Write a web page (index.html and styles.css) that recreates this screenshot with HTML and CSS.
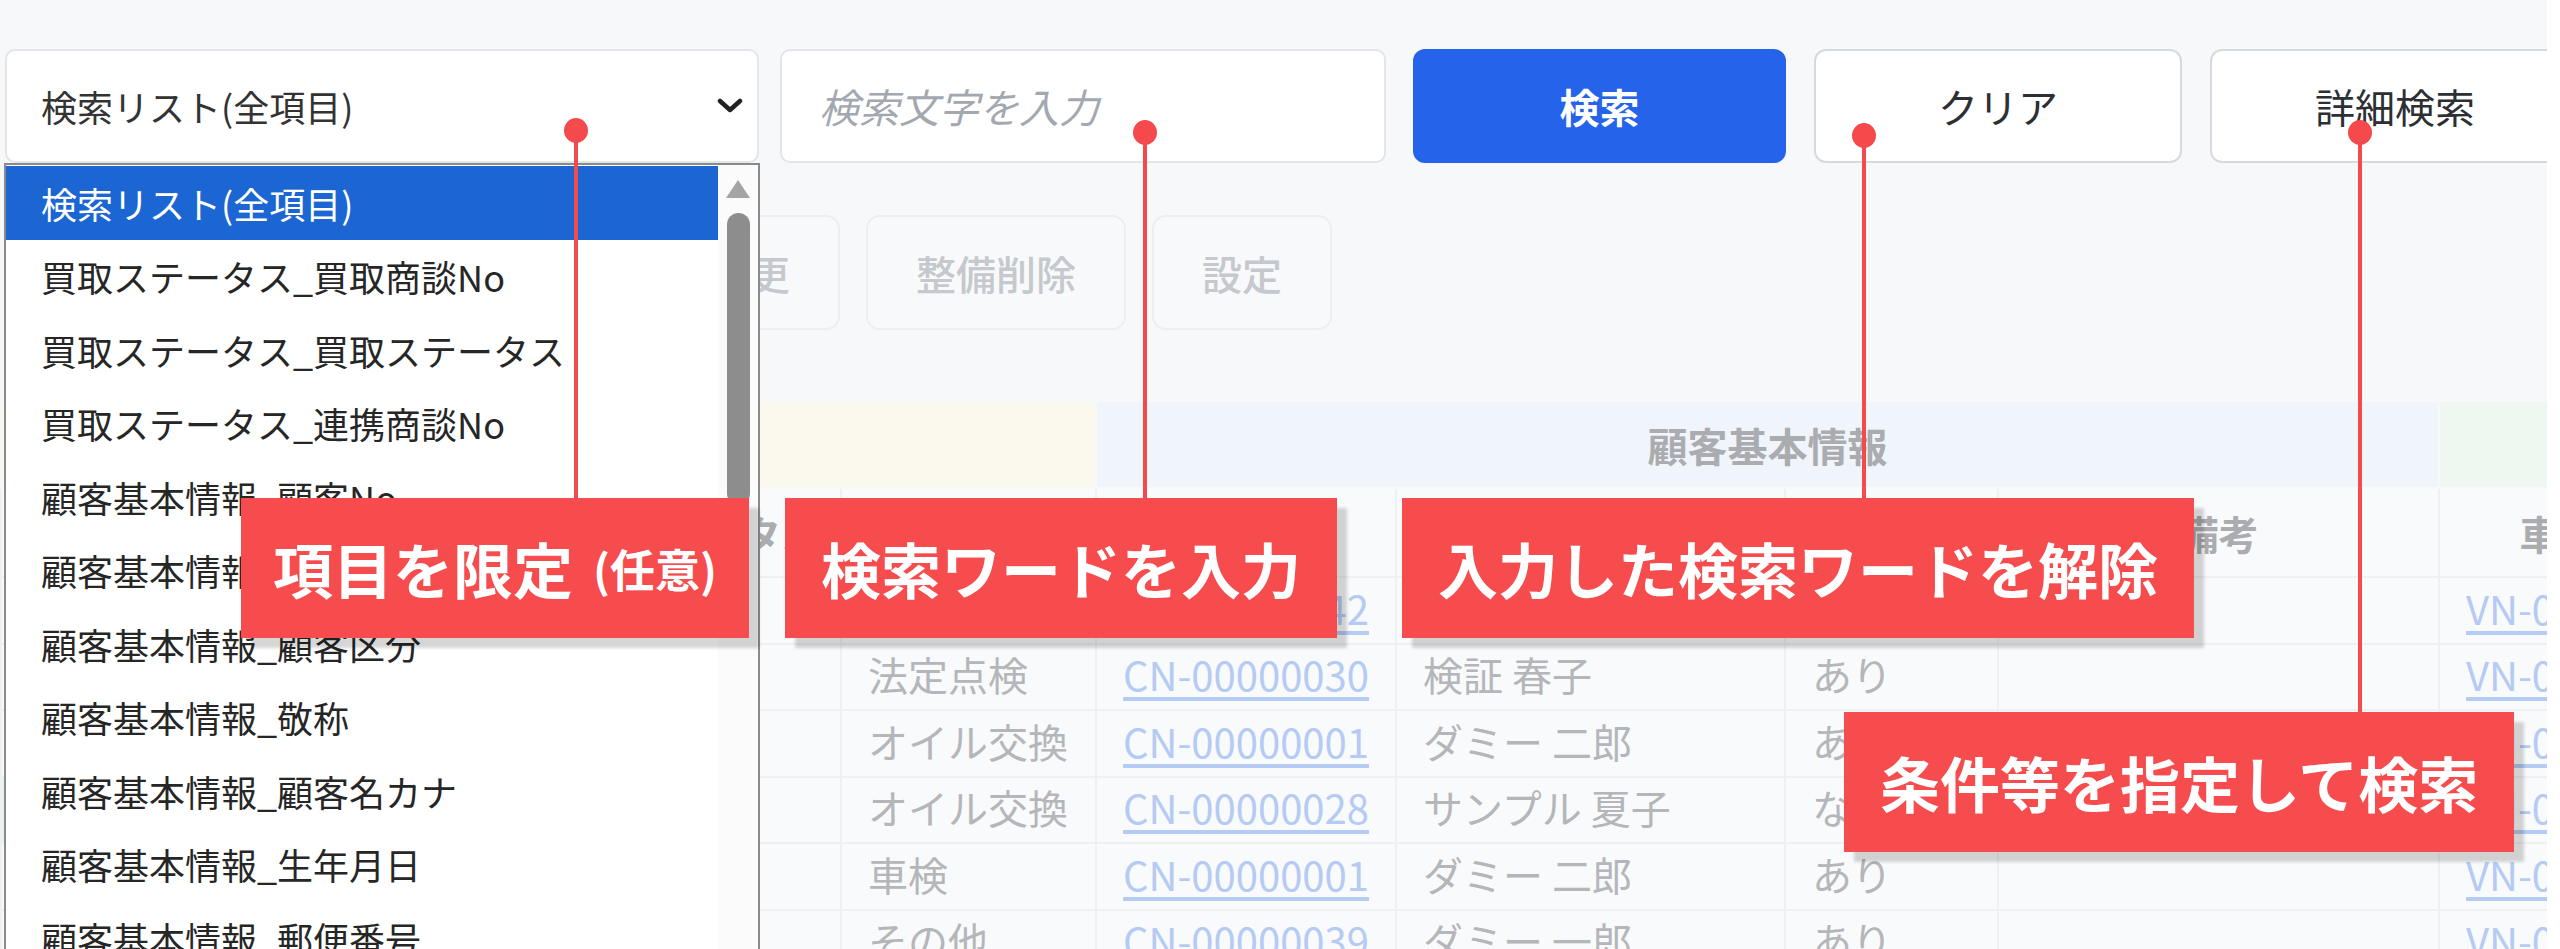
FILE: index.html
```html
<!DOCTYPE html>
<html lang="ja">
<head>
  <meta charset="UTF-8">
  <title>検索リスト</title>
  <link rel="stylesheet" href="styles.css">
</head>
<body>
<div class="page">

  <div class="toolbar">
    <div class="select-box">
      <span>検索リスト(全項目)</span>
      <svg class="chevron" width="26" height="16" viewBox="0 0 26 16">
        <polyline points="3,3 13,12 23,3" fill="none" stroke="#222" stroke-width="4.5" stroke-linecap="round" stroke-linejoin="round"/>
      </svg>
    </div>
    <div class="search-input"><span class="placeholder">検索文字を入力</span></div>
    <button class="btn btn-primary">検索</button>
    <button class="btn btn-clear">クリア</button>
    <button class="btn btn-detail">詳細検索</button>
  </div>

  <div class="actions">
    <button class="act">新規登録</button>
    <button class="act">整備登録</button>
    <button class="act">整備変更</button>
    <button class="act">整備削除</button>
    <button class="act">設定</button>
  </div>

  <table class="grid">
    <colgroup>
      <col style="width:600px">
      <col style="width:240px">
      <col style="width:255px">
      <col style="width:300px">
      <col style="width:389px">
      <col style="width:213px">
      <col style="width:441px">
      <col style="width:296px">
    </colgroup>
    <tr class="group-row">
      <th colspan="3" class="g-yellow">買取ステータス</th>
      <th colspan="4" class="g-blue">顧客基本情報</th>
      <th class="g-green"></th>
    </tr>
    <tr class="head-row">
      <th></th>
      <th>ステータス</th>
      <th>種別</th>
      <th>顧客No</th>
      <th>顧客名</th>
      <th>DM</th>
      <th>備考</th>
      <th>車両No</th>
    </tr>
    <tr>
      <td></td><td></td><td>車検</td>
      <td><a href="#">CN-00000042</a></td><td>サンプル 太郎</td><td>あり</td><td></td>
      <td><a href="#">VN-00000042</a></td>
    </tr>
    <tr>
      <td></td><td></td><td>法定点検</td>
      <td><a href="#">CN-00000030</a></td><td>検証 春子</td><td>あり</td><td></td>
      <td><a href="#">VN-00000030</a></td>
    </tr>
    <tr>
      <td></td><td></td><td>オイル交換</td>
      <td><a href="#">CN-00000001</a></td><td>ダミー 二郎</td><td>あり</td><td></td>
      <td><a href="#">VN-00000001</a></td>
    </tr>
    <tr>
      <td class="mark-green"></td><td></td><td>オイル交換</td>
      <td><a href="#">CN-00000028</a></td><td>サンプル 夏子</td><td>なし</td><td></td>
      <td><a href="#">VN-00000028</a></td>
    </tr>
    <tr>
      <td></td><td></td><td>車検</td>
      <td><a href="#">CN-00000001</a></td><td>ダミー 二郎</td><td>あり</td><td></td>
      <td><a href="#">VN-00000002</a></td>
    </tr>
    <tr>
      <td></td><td></td><td>その他</td>
      <td><a href="#">CN-00000039</a></td><td>ダミー 一郎</td><td>あり</td><td></td>
      <td><a href="#">VN-00000039</a></td>
    </tr>
  </table>

  <!-- 開いたプルダウン -->
  <div class="dropdown">
    <ul>
      <li class="selected">検索リスト(全項目)</li>
      <li>買取ステータス_買取商談No</li>
      <li>買取ステータス_買取ステータス</li>
      <li>買取ステータス_連携商談No</li>
      <li>顧客基本情報_顧客No</li>
      <li>顧客基本情報_顧客名</li>
      <li>顧客基本情報_顧客区分</li>
      <li>顧客基本情報_敬称</li>
      <li>顧客基本情報_顧客名カナ</li>
      <li>顧客基本情報_生年月日</li>
      <li>顧客基本情報_郵便番号</li>
    </ul>
    <div class="scrollbar">
      <svg class="arrow-up" width="26" height="20" viewBox="0 0 26 20">
        <polygon points="13,1 25,19 1,19" fill="#a4a4a4"/>
      </svg>
      <div class="thumb"></div>
    </div>
  </div>

  <!-- 説明 -->
  <div class="pin pin-1"></div>
  <div class="pin pin-2"></div>
  <div class="pin pin-3"></div>
  <div class="pin pin-4"></div>

  <div class="callout c-1">項目を限定<small>(任意)</small></div>
  <div class="callout c-2">検索ワードを入力</div>
  <div class="callout c-3">入力した検索ワードを解除</div>
  <div class="callout c-4">条件等を指定して検索</div>

</div>
</body>
</html>
```

FILE: styles.css
```css
body {
  margin: 0;
  background: #fff;
  font-family: "Noto Sans CJK JP", "Noto Sans", sans-serif;
}

.page {
  position: relative;
  width: 2547px;
  height: 949px;
  overflow: hidden;
  background: #f7f8fa;
}

/* 上段 */
.toolbar {
  display: flex;
  gap: 28px;
  padding: 49px 0 0 5px;
}

.toolbar > * {
  flex-shrink: 0;
}

.select-box {
  width: 754px;
  height: 114px;
  box-sizing: border-box;
  margin-right: -7px;
  padding: 0 14px 0 34px;
  display: flex;
  align-items: center;
  justify-content: space-between;
  background: #fff;
  border: 2px solid #e3e5e9;
  border-radius: 10px;
  font-size: 36px;
  line-height: 1;
  color: #333;
}

.search-input {
  width: 606px;
  height: 114px;
  box-sizing: border-box;
  margin-right: -1px;
  padding-left: 37px;
  display: flex;
  align-items: center;
  background: #fff;
  border: 2px solid #e3e5e9;
  border-radius: 10px;
}

.placeholder {
  font-size: 40px;
  line-height: 1;
  font-style: italic;
  color: #a3a8b0;
}

.btn {
  height: 114px;
  box-sizing: border-box;
  background: #fff;
  border: 2px solid #d6d9de;
  border-radius: 12px;
  font-family: inherit;
  font-size: 40px;
  line-height: 1;
  color: #2c2f33;
}

.btn-primary {
  width: 373px;
  background: #2563eb;
  border-color: #2563eb;
  color: #fff;
  font-weight: 700;
}

.btn-clear {
  width: 368px;
}

.btn-detail {
  width: 370px;
}

/* 二段目ボタン */
.actions {
  display: flex;
  gap: 26px;
  margin-top: 52px;
  padding-left: 8px;
}

.act {
  height: 115px;
  padding: 0 48px;
  background: #f8f9fb;
  border: 2px solid #eceef1;
  border-radius: 14px;
  font-family: inherit;
  font-size: 40px;
  font-weight: 500;
  line-height: 1;
  color: #c5c8cc;
}

/* 一覧 */
.grid {
  margin-top: 70px;
  width: 2734px;
  table-layout: fixed;
  border-collapse: collapse;
  font-size: 40px;
  line-height: 1;
  color: #b4b6b9;
}

.grid th,
.grid td {
  border: 2px solid #eef0f2;
  background: #f9fafb;
  white-space: nowrap;
  overflow: hidden;
}

.grid th {
  font-weight: 700;
  color: #aaacaf;
  text-align: center;
}

.grid td {
  height: 59.5px;
  padding: 0 26px 5px;
}

.group-row th {
  height: 83px;
  border-color: transparent;
}

.head-row th {
  height: 85px;
}

.g-yellow {
  background: #fbf9ed !important;
}

.g-blue {
  background: #f0f4fb !important;
}

.g-green {
  background: #eff7f1 !important;
}

.grid td.mark-green {
  background: #e3f5e6;
}

.grid a {
  color: #b5cbf3;
  text-decoration: underline;
  text-underline-offset: 6px;
}

/* プルダウン */
.dropdown {
  position: absolute;
  left: 4px;
  top: 163px;
  width: 756px;
  height: 820px;
  box-sizing: border-box;
  display: flex;
  background: #fff;
  border: 2px solid #8a8a8a;
}

.dropdown ul {
  flex: 1;
  margin: 0;
  padding: 1px 0 0;
  list-style: none;
}

.dropdown li {
  height: 73.5px;
  display: flex;
  align-items: center;
  padding-left: 35px;
  font-size: 36px;
  line-height: 1;
  color: #262626;
}

.dropdown li.selected {
  background: #1b66d3;
  color: #fff;
}

.scrollbar {
  width: 40px;
  display: flex;
  flex-direction: column;
  align-items: center;
  background: #fbfbfb;
}

.arrow-up {
  margin-top: 14px;
}

.thumb {
  width: 23px;
  height: 292px;
  margin-top: 14px;
  background: #8d8d8d;
  border-radius: 12px;
}

/* 説明用の吹き出し */
.callout {
  position: absolute;
  height: 140px;
  box-sizing: border-box;
  padding: 0 36px;
  display: flex;
  align-items: center;
  background: #f64c4e;
  color: #fff;
  font-size: 60px;
  font-weight: 700;
  line-height: 1;
  white-space: nowrap;
  box-shadow: 10px 10px 3px rgba(0, 0, 0, 0.16);
}

.callout small {
  margin-left: 20px;
  font-size: 45px;
}

.c-1 { left: 241px; top: 498px; padding: 0 32px; }
.c-2 { left: 785px; top: 498px; }
.c-3 { left: 1402px; top: 498px; }
.c-4 { left: 1844px; top: 712px; }

.pin {
  position: absolute;
  width: 24px;
  margin-left: -12px;
}

.pin::before {
  content: "";
  position: absolute;
  left: 0;
  top: 0;
  width: 24px;
  height: 25px;
  border-radius: 50%;
  background: #f54a4c;
}

.pin::after {
  content: "";
  position: absolute;
  left: 10px;
  top: 12px;
  bottom: 0;
  width: 4px;
  background: #f54a4c;
}

.pin-1 { left: 576px; top: 118px; height: 380px; }
.pin-2 { left: 1145px; top: 120px; height: 378px; }
.pin-3 { left: 1864px; top: 123px; height: 375px; }
.pin-4 { left: 2360px; top: 120px; height: 592px; }
```
